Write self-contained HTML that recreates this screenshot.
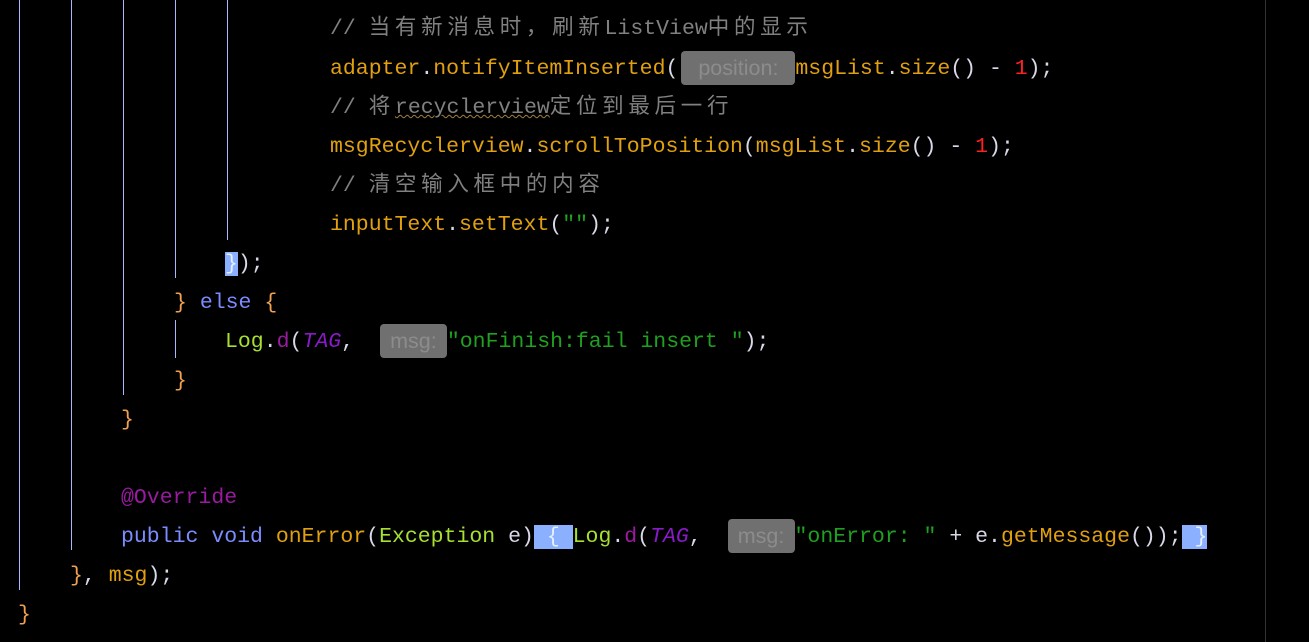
<!DOCTYPE html>
<html><head><meta charset="utf-8"><style>
body{margin:0;background:#000;width:1309px;height:642px;overflow:hidden;position:relative;font-family:"Liberation Mono","Noto Sans CJK SC",monospace;font-size:21.5px;color:#d8d8e8}
.l{position:absolute;height:39px;line-height:39px;white-space:pre}
.g{position:absolute;width:1px;background:#a8b8ff}
.c{color:#808080}.o{color:#e0a010}.k{color:#7a8cff}.gr{color:#a8e030}.p{color:#9a1aa0}.t{color:#8a1ac8;font-style:italic}.s{color:#20a020}.b{color:#f0a050}.n{color:#ff2020}.w{color:#e8e8f0}
.cj{letter-spacing:4.7px}
.h{display:inline-block;background:#707070;color:#8c8c8c;border-radius:4px;font-family:"Liberation Sans",sans-serif;height:34px;line-height:34px;text-align:center;vertical-align:middle}
.hl{background:#8ab0ff;color:#e8f0ff}
.u{text-decoration:underline wavy #a08040;text-decoration-thickness:1px}
</style></head><body>
<div class="g" style="left:19px;top:0;height:590px"></div>
<div class="g" style="left:71px;top:0;height:550px"></div>
<div class="g" style="left:123px;top:0;height:395px"></div>
<div class="g" style="left:175px;top:0;height:278px"></div>
<div class="g" style="left:175px;top:320px;height:38px"></div>
<div class="g" style="left:227px;top:0;height:240px"></div>
<div style="position:absolute;left:1265px;top:0;width:1px;height:642px;background:#333"></div>

<div class="l c" style="left:330px;top:10px">// <span class="cj">当有新消息时，刷新</span>ListView<span class="cj">中的显示</span></div>
<div class="l" style="left:330px;top:50px"><span class="o">adapter</span>.<span class="o">notifyItemInserted</span>(<span class="h" style="width:114px;margin-left:3px">position:</span><span class="o">msgList</span>.<span class="o">size</span>() - <span class="n">1</span>);</div>
<div class="l c" style="left:330px;top:89px">// <span class="cj">将</span><span class="u">recyclerview</span><span class="cj">定位到最后一行</span></div>
<div class="l" style="left:330px;top:128px"><span class="o">msgRecyclerview</span>.<span class="o">scrollToPosition</span>(<span class="o">msgList</span>.<span class="o">size</span>() - <span class="n">1</span>);</div>
<div class="l c" style="left:330px;top:167px">// <span class="cj">清空输入框中的内容</span></div>
<div class="l" style="left:330px;top:206px"><span class="o">inputText</span>.<span class="o">setText</span>(<span class="s">""</span>);</div>
<div class="l" style="left:225px;top:245px"><span class="hl">}</span>);</div>
<div class="l" style="left:174px;top:284px"><span class="b">}</span> <span class="k">else</span> <span class="b">{</span></div>
<div class="l" style="left:225px;top:323px"><span class="gr">Log</span>.<span class="p">d</span>(<span class="t">TAG</span>,  <span class="h" style="width:67px">msg:</span><span class="s">"onFinish:fail insert "</span>);</div>
<div class="l b" style="left:174px;top:362px">}</div>
<div class="l b" style="left:121px;top:401px">}</div>
<div class="l p" style="left:121px;top:479px">@Override</div>
<div class="l" style="left:121px;top:518px"><span class="k">public void</span> <span class="o">onError</span>(<span class="gr">Exception</span> e)<span class="hl"> { </span><span class="gr">Log</span>.<span class="p">d</span>(<span class="t">TAG</span>,  <span class="h" style="width:67px">msg:</span><span class="s">"onError: "</span> + e.<span class="o">getMessage</span>());<span class="hl"> }</span></div>
<div class="l" style="left:70px;top:557px"><span class="b">}</span>, <span class="o">msg</span>);</div>
<div class="l b" style="left:18px;top:596px">}</div>
</body></html>
